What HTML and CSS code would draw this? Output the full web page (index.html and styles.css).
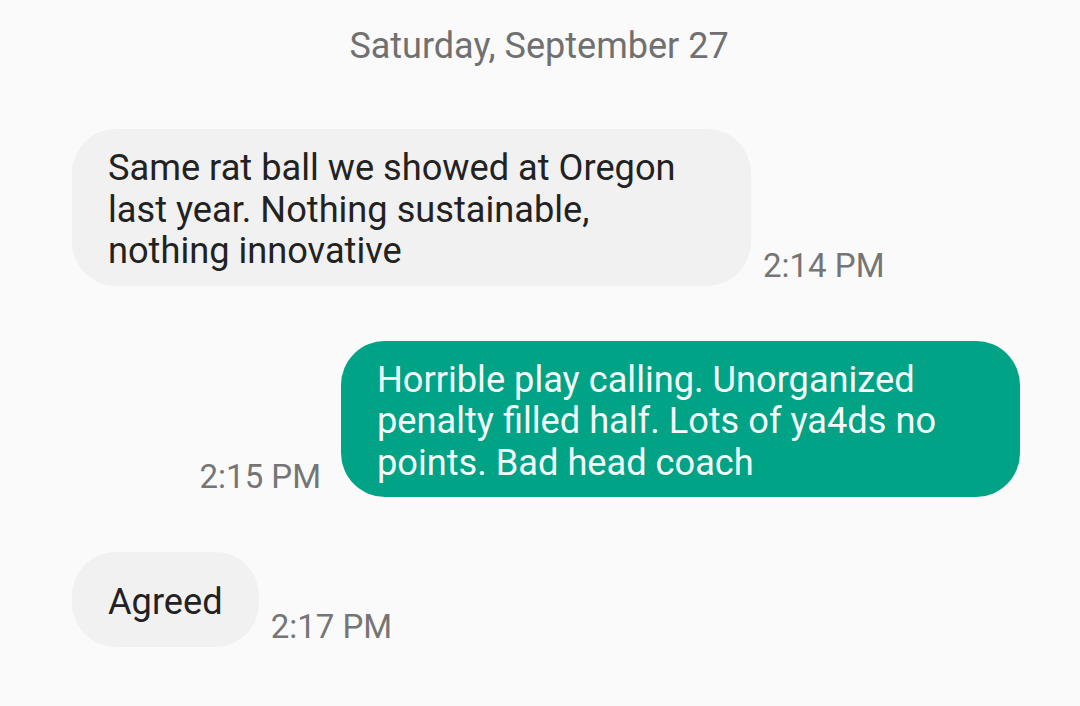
FILE: index.html
```html
<!DOCTYPE html>
<html lang="en">

<head>
    <meta charset="UTF-8">
    <meta name="viewport" content="width=device-width, initial-scale=1.0">
    <title>Messages</title>
    <link rel="stylesheet" href="styles.css">
</head>

<body>
    <div id="chat">
        <p class="fecha">Saturday, September 27</p>

        <div class="fila recibido">
            <div class="burbuja">Same rat ball we showed at Oregon last year. Nothing sustainable, nothing innovative</div>
            <span class="hora">2:14 PM</span>
        </div>

        <div class="fila enviado">
            <span class="hora">2:15 PM</span>
            <div class="burbuja">Horrible play calling. Unorganized penalty filled half. Lots of ya4ds no points. Bad head coach</div>
        </div>

        <div class="fila recibido">
            <div class="burbuja">Agreed</div>
            <span class="hora">2:17 PM</span>
        </div>
    </div>
</body>

</html>
```

FILE: styles.css
```css
body {
    margin: 0;
    height: 100vh;
    background-color: #fafafa;
    font-family: Roboto, 'Liberation Sans', sans-serif;
    overflow: hidden;
}

#chat {
    display: flex;
    flex-direction: column;
    gap: 55px;
    padding: 0 60px 0 72px;
}

.fecha {
    margin: 25px -58px 7px -72px;
    text-align: center;
    font-size: 36px;
    color: #707070;
}

.fila {
    display: flex;
    align-items: flex-end;
}

.enviado {
    justify-content: flex-end;
}

.burbuja {
    display: flex;
    align-items: center;
    box-sizing: border-box;
    max-width: 679px;
    min-height: 95px;
    padding: 18px 36px 14px;
    border-radius: 44px;
    font-size: 36.2px;
    line-height: 41.5px;
}

.recibido .burbuja {
    background-color: #f1f1f1;
    color: #222;
}

.enviado .burbuja {
    background-color: #00a386;
    color: #f4fbf9;
}

.hora {
    font-size: 33px;
    color: #757575;
    margin-bottom: 1px;
}

.recibido .hora {
    margin-left: 12px;
}

.enviado .hora {
    margin-right: 20px;
}
```
